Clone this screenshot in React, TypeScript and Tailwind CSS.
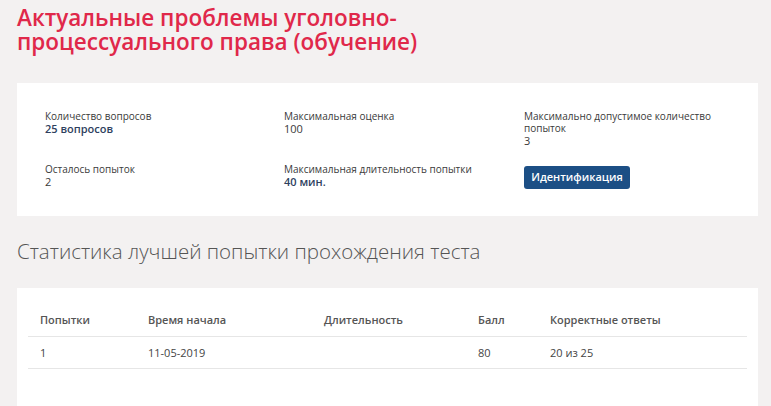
const info = [
  { label: 'Количество вопросов', value: '25 вопросов', strong: true },
  { label: 'Максимальная оценка', value: '100', strong: false },
  { label: 'Максимально допустимое количество попыток', value: '3', strong: false },
  { label: 'Осталось попыток', value: '2', strong: false },
  { label: 'Максимальная длительность попытки', value: '40 мин.', strong: true },
];

const columns = ['Попытки', 'Время начала', 'Длительность', 'Балл', 'Корректные ответы'];
const colWidths = ['w-[108px]', 'w-[176px]', 'w-[154px]', 'w-[72px]', ''];
const rows = [['1', '11-05-2019', '', '80', '20 из 25']];

function InfoItem({ label, value, strong }: { label: string; value: string; strong: boolean }) {
  return (
    <div>
      <div className="pr-[24px] text-[10px] leading-[12px] text-[#3a3a3a]">{label}</div>
      <div
        className={
          strong
            ? 'text-[11px] font-semibold leading-[14px] text-[#2e3f5e]'
            : 'text-[11px] leading-[14px] text-[#3a3a3a]'
        }
      >
        {value}
      </div>
    </div>
  );
}

export default function App() {
  return (
    <div className="min-h-[406px] bg-[#f3f1f1] pl-[17px] pr-[13px] pt-[6px] font-['Open_Sans',sans-serif]">
      <h1 className="w-[430px] text-[22.5px] font-semibold leading-[24px] text-[#e0284a]">
        Актуальные проблемы уголовно-процессуального права (обучение)
      </h1>

      {/* Info card */}
      <div className="mt-[29px] bg-white pl-[28px] pt-[27px] pb-[27px]">
        <div className="grid grid-cols-[239px_240px_220px] gap-y-[15px]">
          {info.map((item) => (
            <InfoItem key={item.label} {...item} />
          ))}
          <div>
            <button className="h-[23px] w-[106px] rounded-[3px] bg-[#1c4f85] text-[11px] font-semibold text-white">
              Идентификация
            </button>
          </div>
        </div>
      </div>

      <h2 className="mt-[22px] text-[20.5px] font-light leading-[26px] text-[#555]">
        Статистика лучшей попытки прохождения теста
      </h2>

      {/* Best attempt table */}
      <div className="mt-[24px] bg-white px-[11px] pt-[24px] pb-[40px]">
        <table className="w-full border-collapse text-left text-[11px] text-[#444]">
          <thead>
            <tr className="border-b border-[#e6e6e6]">
              {columns.map((c, i) => (
                <th
                  key={c}
                  className={'p-0 pb-[8px] pl-[12px] align-bottom font-semibold leading-[16px] text-[#555] ' + colWidths[i]}
                >
                  {c}
                </th>
              ))}
            </tr>
          </thead>
          <tbody>
            {rows.map((r) => (
              <tr key={r[0]} className="border-b border-[#e6e6e6]">
                {r.map((cell, i) => (
                  <td key={i} className="h-[32px] p-0 pl-[12px] leading-[16px]">
                    {cell}
                  </td>
                ))}
              </tr>
            ))}
          </tbody>
        </table>
      </div>
    </div>
  );
}
